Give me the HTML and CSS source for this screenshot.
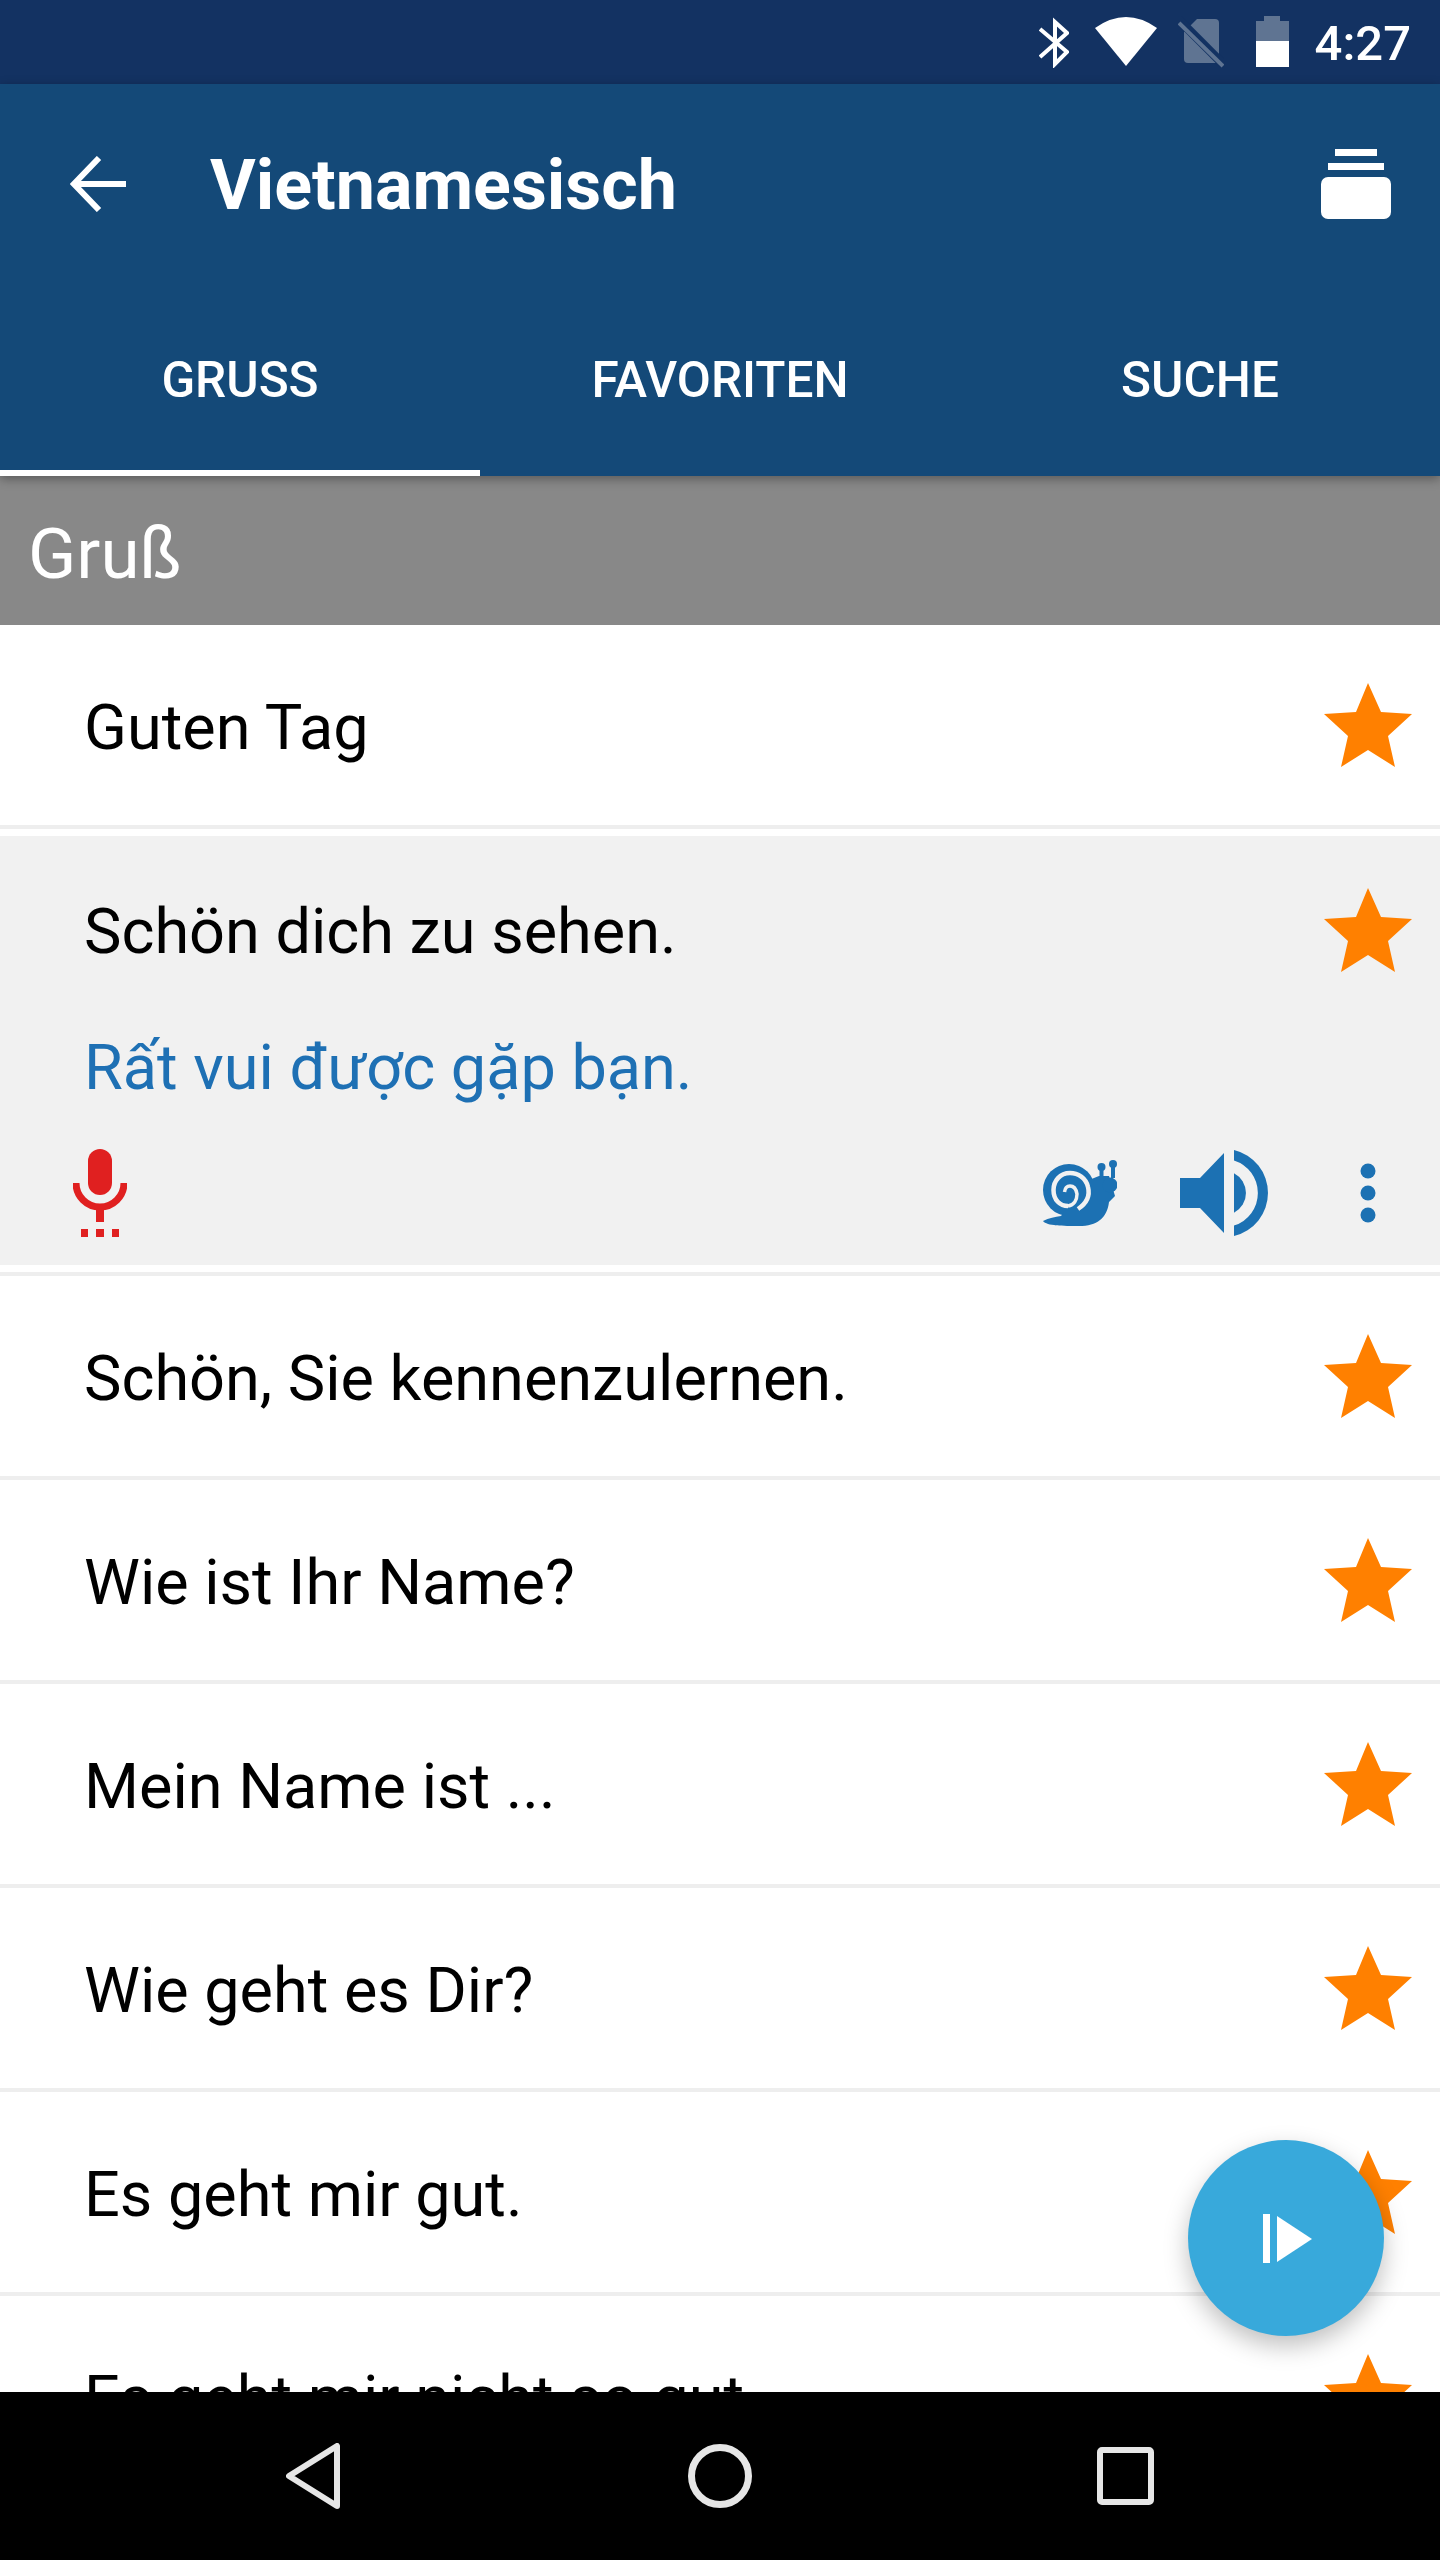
FILE: index.html
```html
<!DOCTYPE html>
<html lang="de">
<head>
    <meta charset="utf-8">
    <title>Vietnamesisch</title>
    <link rel="stylesheet" href="styles.css">
</head>
<body>
    <svg class="defs" width="0" height="0">
        <symbol id="star" viewBox="0 0 88 84">
            <polygon points="44,0 57,29 88,31 64,53 71,84 44,67 17,84 24,53 0,31 32,29"/>
        </symbol>
    </svg>

    <div class="phone">
        <!-- status bar -->
        <div class="statusbar">
            <svg class="st-bt" width="30" height="52" viewBox="1040 16 30 52" fill="none" stroke="#fff" stroke-width="4">
                <path d="M1041 29 L1068 52 L1056 64 V22 L1068 33 L1041 57"/>
            </svg>
            <svg class="st-wifi" width="62" height="52" viewBox="1096 16 62 52" fill="#fff">
                <path d="M1127 66 L1096 28 Q1127 6 1158 28 Z"/>
            </svg>
            <svg class="st-sim" width="46" height="52" viewBox="1179 16 46 52">
                <path d="M1198 19 H1216 Q1220 19 1220 23 V63 H1189 Q1185 63 1185 59 V32 Z" fill="#5f7492"/>
                <path d="M1178 18 L1226 66" stroke="#133262" stroke-width="9"/>
                <path d="M1180 23 L1224 66" stroke="#5f7492" stroke-width="4"/>
            </svg>
            <svg class="st-batt" width="33" height="52" viewBox="1257 16 33 52">
                <path d="M1265 16 H1281 V21 H1290 V41 H1257 V21 H1265 Z" fill="#5f7492"/>
                <rect x="1257" y="41" width="33" height="26" fill="#fff"/>
            </svg>
            <span class="st-time">4:27</span>
        </div>

        <!-- app bar -->
        <header class="appbar">
            <div class="toolbar">
                <svg class="back" width="56" height="56" viewBox="0 0 56 56" fill="none" stroke="#fff" stroke-width="6">
                    <path d="M56 28 H5"/>
                    <path d="M29 2 L4 28 L29 54"/>
                </svg>
                <h1 class="title">Vietnamesisch</h1>
                <svg class="cards" width="70" height="70" viewBox="0 0 70 70" fill="#fff">
                    <rect x="14" y="0" width="42" height="7"/>
                    <rect x="7" y="14" width="56" height="7"/>
                    <rect x="0" y="28" width="70" height="42" rx="7"/>
                </svg>
            </div>
            <nav class="tabs">
                <div class="tab tab-active">GRUSS</div>
                <div class="tab">FAVORITEN</div>
                <div class="tab">SUCHE</div>
            </nav>
        </header>

        <main class="content">
            <div class="section">Gruß</div>

            <div class="row">
                <span class="phrase">Guten Tag</span>
                <svg class="star"><use href="#star"/></svg>
            </div>

            <!-- aufgeklappte Zeile -->
            <div class="row-open">
                <div class="panel">
                    <div class="panel-head">
                        <span class="phrase">Schön dich zu sehen.</span>
                        <svg class="star"><use href="#star"/></svg>
                    </div>
                    <div class="translation">Rất vui được gặp bạn.</div>
                    <div class="actions">
                        <svg class="mic" width="54" height="88" viewBox="0 0 54 88" fill="#e02020">
                            <rect x="15" y="0" width="24" height="46" rx="12"/>
                            <path d="M3 34 A24 24 0 0 0 51 34" fill="none" stroke="#e02020" stroke-width="7"/>
                            <rect x="23" y="58" width="8" height="15"/>
                            <rect x="8" y="80" width="7" height="8"/>
                            <rect x="23" y="80" width="8" height="8"/>
                            <rect x="39" y="80" width="7" height="8"/>
                        </svg>
                        <svg class="snail" width="74" height="66" viewBox="0 0 74 66" fill="#1c71b3">
                            <circle cx="26" cy="30" r="26"/>
                            <path d="M0 61 C6 58 12 57 18 56 L46 20 L56 16 H66 L72 36 L66 42 C64 58 54 66 36 66 C20 66 4 66 0 61 Z"/>
                            <circle cx="67" cy="25" r="7.5"/>
                            <circle cx="58.5" cy="7" r="4"/>
                            <circle cx="70" cy="4" r="4"/>
                            <path d="M58.5 7 V20 M70 4 V18" fill="none" stroke="#1c71b3" stroke-width="4"/>
                            <path d="M35 49 C44 43 47 35 45 27 C43 18 35 13 27 13 C17 13 10.5 21 10.5 30 C10.5 40 17 46 25 46" fill="none" stroke="#f1f1f1" stroke-width="4.5"/>
                            <path d="M25 46 C31 45 34 40 34 34 C33 28 30 26 27 26 C24 26 22 28 21.5 32" fill="none" stroke="#f1f1f1" stroke-width="3.5"/>
                        </svg>
                        <svg class="speaker" width="88" height="86" viewBox="1180 1150 88 86" fill="#1c71b3">
                            <path d="M1180 1178 H1200 L1224 1153 V1233 L1200 1208 H1180 Z"/>
                            <path d="M1234 1173.3 A22.2 22.2 0 0 1 1234 1212.7 Z"/>
                            <path d="M1234 1150 A44.2 44.2 0 0 1 1234 1236 V1225.6 A34.2 34.2 0 0 0 1234 1160.4 Z"/>
                        </svg>
                        <svg class="dots" width="16" height="60" viewBox="0 0 16 60" fill="#1c71b3">
                            <circle cx="8" cy="8" r="7.5"/>
                            <circle cx="8" cy="30" r="7.5"/>
                            <circle cx="8" cy="52" r="7.5"/>
                        </svg>
                    </div>
                </div>
            </div>

            <div class="row">
                <span class="phrase">Schön, Sie kennenzulernen.</span>
                <svg class="star"><use href="#star"/></svg>
            </div>
            <div class="row">
                <span class="phrase">Wie ist Ihr Name?</span>
                <svg class="star"><use href="#star"/></svg>
            </div>
            <div class="row">
                <span class="phrase">Mein Name ist ...</span>
                <svg class="star"><use href="#star"/></svg>
            </div>
            <div class="row">
                <span class="phrase">Wie geht es Dir?</span>
                <svg class="star"><use href="#star"/></svg>
            </div>
            <div class="row">
                <span class="phrase">Es geht mir gut.</span>
                <svg class="star"><use href="#star"/></svg>
            </div>
            <div class="row">
                <span class="phrase">Es geht mir nicht so gut.</span>
                <svg class="star"><use href="#star"/></svg>
            </div>

            <button class="fab">
                <svg width="49" height="49" viewBox="0 0 49 49" fill="#fff">
                    <rect x="0" y="0" width="7" height="49"/>
                    <polygon points="14,2 49,25 14,48"/>
                </svg>
            </button>
        </main>

        <!-- navigation bar -->
        <footer class="navbar">
            <svg class="nav-back" width="54" height="66" viewBox="0 0 54 66" fill="none" stroke="#e6e6e6" stroke-width="6" stroke-linejoin="round">
                <path d="M51 3 V63 L3 33 Z"/>
            </svg>
            <svg width="64" height="66" viewBox="0 0 64 66" fill="none" stroke="#e6e6e6" stroke-width="7">
                <circle cx="32" cy="33" r="28.5"/>
            </svg>
            <svg width="57" height="58" viewBox="0 0 57 58" fill="none" stroke="#e6e6e6" stroke-width="6">
                <rect x="3" y="3" width="51" height="52" rx="2"/>
            </svg>
        </footer>
    </div>
</body>
</html>
```

FILE: styles.css
```css
html, body {
    margin: 0;
    padding: 0;
    background: #000;
}

.defs {
    position: absolute;
}

.phone {
    width: 1440px;
    height: 2560px;
    display: flex;
    flex-direction: column;
    overflow: hidden;
    font-family: Roboto, "Liberation Sans", sans-serif;
    background: #fff;
}

/* status bar */
.statusbar {
    height: 84px;
    flex: none;
    display: flex;
    align-items: center;
    justify-content: flex-end;
    padding-right: 29px;
    background: #133262;
}
.st-wifi { margin-left: 26px; }
.st-sim { margin-left: 21px; }
.st-batt { margin-left: 32px; }
.st-time {
    margin-left: 26px;
    padding-top: 4px;
    color: #fff;
    font-size: 49px;
    font-weight: 500;
    line-height: 58px;
}

/* app bar */
.appbar {
    flex: none;
    position: relative;
    z-index: 2;
    background: #144978;
    box-shadow: 0 3px 10px rgba(0, 0, 0, 0.35);
}
.toolbar {
    height: 200px;
    display: flex;
    align-items: center;
    padding: 0 49px 0 70px;
}
.title {
    margin: 0 auto 0 84px;
    padding-top: 2px;
    color: #fff;
    font-size: 70px;
    font-weight: 700;
}
.tabs {
    height: 192px;
    display: grid;
    grid-template-columns: repeat(3, 1fr);
}
.tab {
    position: relative;
    display: flex;
    align-items: center;
    justify-content: center;
    color: #fff;
    font-size: 49.5px;
    font-weight: 500;
}
.tab-active::after {
    content: "";
    position: absolute;
    left: 0;
    right: 0;
    bottom: 0;
    height: 6px;
    background: #fff;
}

/* list */
.content {
    flex: 1;
    position: relative;
    overflow: hidden;
}
.section {
    height: 149px;
    box-sizing: border-box;
    display: flex;
    align-items: center;
    padding: 6px 0 0 28px;
    background: #888;
    color: #fff;
    font-size: 71px;
}
.row {
    height: 200px;
    display: flex;
    align-items: center;
    justify-content: space-between;
    padding: 0 28px 0 84px;
    border-bottom: 4px solid #eee;
}
.phrase {
    padding-top: 4px;
    color: #000;
    font-size: 63px;
}
.star {
    width: 88px;
    height: 84px;
    fill: #ff8000;
    flex: none;
}

/* open row */
.row-open {
    padding: 7px 0;
    border-bottom: 4px solid #eee;
}
.panel {
    height: 429px;
    background: #f1f1f1;
}
.panel-head {
    height: 188px;
    display: flex;
    align-items: center;
    justify-content: space-between;
    padding: 0 28px 0 84px;
}
.panel-head .phrase {
    padding-top: 2px;
}
.translation {
    height: 84px;
    line-height: 88px;
    padding-left: 84px;
    color: #1e70b4;
    font-size: 63px;
}
.actions {
    display: flex;
    align-items: center;
    padding: 41px 64px 0 73px;
}
.snail { margin-left: auto; }
.speaker { margin-left: 63px; }
.dots { margin-left: 92px; }

/* play button */
.fab {
    position: absolute;
    right: 56px;
    bottom: 56px;
    width: 196px;
    height: 196px;
    padding: 0 0 0 2px;
    border: 0;
    border-radius: 50%;
    display: flex;
    align-items: center;
    justify-content: center;
    background: #38a9db;
    box-shadow: 0 10px 24px rgba(0, 0, 0, 0.25);
}

/* navigation bar */
.navbar {
    height: 168px;
    flex: none;
    box-sizing: border-box;
    padding-left: 3px;
    display: flex;
    align-items: center;
    justify-content: center;
    gap: 345px;
    background: #000;
}
.nav-back {
    margin: 0 3px 0 -3px;
}
```
